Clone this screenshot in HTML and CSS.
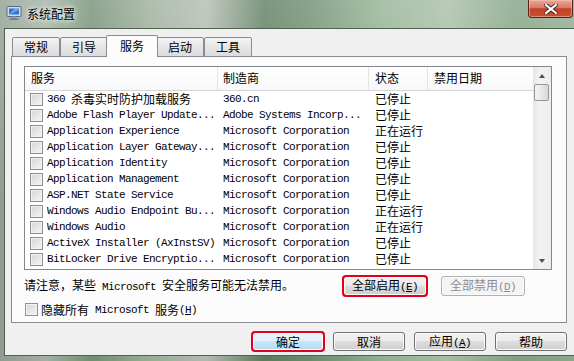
FILE: index.html
```html
<!DOCTYPE html>
<html lang="zh-CN">
<head>
    <meta charset="UTF-8">
    <title>系统配置</title>
    <link rel="stylesheet" href="styles.css">
</head>
<body>
    <div class="window">
        <div class="titlebar">
            <!-- icono de la ventana -->
            <svg class="app-icon" viewBox="0 0 16 16" width="16" height="16">
                <rect x="1" y="1.5" width="14" height="10" rx="1" fill="#d3dbe6" stroke="#5b6b80"/>
                <rect x="3" y="3.5" width="10" height="6" fill="#2f76d2"/>
                <path d="M3 9.5 L9 3.5 L13 3.5 L13 4.5 L4 9.5 Z" fill="#8fc0f2" opacity="0.7"/>
                <rect x="6" y="11.5" width="4" height="2" fill="#8a97a8"/>
                <rect x="3.5" y="13.5" width="9" height="1.5" fill="#6b7889"/>
            </svg>
            <span class="title">系统配置</span>
            <div class="close-btn">
                <svg viewBox="0 0 14 10" width="14" height="10">
                    <path d="M2 1 L12 9 M12 1 L2 9" stroke="#3b2620" stroke-width="4" stroke-linecap="square"/>
                    <path d="M2 1 L12 9 M12 1 L2 9" stroke="#ffffff" stroke-width="2.2" stroke-linecap="square"/>
                </svg>
            </div>
        </div>

        <div class="client">
            <div class="tabs">
                <div class="tab">常规</div>
                <div class="tab">引导</div>
                <div class="tab active">服务</div>
                <div class="tab">启动</div>
                <div class="tab">工具</div>
            </div>

            <div class="panel">
                <div class="listbox">
                    <div class="list-body">
                        <div class="row head">
                            <div class="hcell c1">服务</div>
                            <div class="hcell c2">制造商</div>
                            <div class="hcell c3">状态</div>
                            <div class="hcell c4">禁用日期</div>
                        </div>
                        <div class="row">
                            <div class="cell c1"><span class="cb"></span><span class="m">360 </span>杀毒实时防护加载服务</div>
                            <div class="cell c2 m">360.cn</div>
                            <div class="cell c3">已停止</div>
                            <div class="cell c4"></div>
                        </div>
                        <div class="row">
                            <div class="cell c1"><span class="cb"></span><span class="m">Adobe Flash Player Update...</span></div>
                            <div class="cell c2 m">Adobe Systems Incorp...</div>
                            <div class="cell c3">已停止</div>
                            <div class="cell c4"></div>
                        </div>
                        <div class="row">
                            <div class="cell c1"><span class="cb"></span><span class="m">Application Experience</span></div>
                            <div class="cell c2 m">Microsoft Corporation</div>
                            <div class="cell c3">正在运行</div>
                            <div class="cell c4"></div>
                        </div>
                        <div class="row">
                            <div class="cell c1"><span class="cb"></span><span class="m">Application Layer Gateway...</span></div>
                            <div class="cell c2 m">Microsoft Corporation</div>
                            <div class="cell c3">已停止</div>
                            <div class="cell c4"></div>
                        </div>
                        <div class="row">
                            <div class="cell c1"><span class="cb"></span><span class="m">Application Identity</span></div>
                            <div class="cell c2 m">Microsoft Corporation</div>
                            <div class="cell c3">已停止</div>
                            <div class="cell c4"></div>
                        </div>
                        <div class="row">
                            <div class="cell c1"><span class="cb"></span><span class="m">Application Management</span></div>
                            <div class="cell c2 m">Microsoft Corporation</div>
                            <div class="cell c3">已停止</div>
                            <div class="cell c4"></div>
                        </div>
                        <div class="row">
                            <div class="cell c1"><span class="cb"></span><span class="m">ASP.NET State Service</span></div>
                            <div class="cell c2 m">Microsoft Corporation</div>
                            <div class="cell c3">已停止</div>
                            <div class="cell c4"></div>
                        </div>
                        <div class="row">
                            <div class="cell c1"><span class="cb"></span><span class="m">Windows Audio Endpoint Bu...</span></div>
                            <div class="cell c2 m">Microsoft Corporation</div>
                            <div class="cell c3">正在运行</div>
                            <div class="cell c4"></div>
                        </div>
                        <div class="row">
                            <div class="cell c1"><span class="cb"></span><span class="m">Windows Audio</span></div>
                            <div class="cell c2 m">Microsoft Corporation</div>
                            <div class="cell c3">正在运行</div>
                            <div class="cell c4"></div>
                        </div>
                        <div class="row">
                            <div class="cell c1"><span class="cb"></span><span class="m">ActiveX Installer (AxInstSV)</span></div>
                            <div class="cell c2 m">Microsoft Corporation</div>
                            <div class="cell c3">已停止</div>
                            <div class="cell c4"></div>
                        </div>
                        <div class="row">
                            <div class="cell c1"><span class="cb"></span><span class="m">BitLocker Drive Encryptio...</span></div>
                            <div class="cell c2 m">Microsoft Corporation</div>
                            <div class="cell c3">已停止</div>
                            <div class="cell c4"></div>
                        </div>
                    </div>
                    <div class="scrollbar">
                        <div class="sb-arrow"><span class="tri up"></span></div>
                        <div class="sb-thumb"></div>
                        <div class="sb-track"></div>
                        <div class="sb-arrow"><span class="tri down"></span></div>
                    </div>
                </div>

                <div class="note-row">
                    <span class="note">请注意，某些<span class="m"> Microsoft </span>安全服务可能无法禁用。</span>
                    <button class="btn wide marked">全部启用<span class="m">(<u>E</u>)</span></button>
                    <button class="btn wide" disabled>全部禁用<span class="m">(<u>D</u>)</span></button>
                </div>

                <label class="hide-ms">
                    <span class="cb"></span>隐藏所有<span class="m"> Microsoft </span>服务<span class="m">(<u>H</u>)</span>
                </label>
            </div>

            <div class="actions">
                <button class="btn default marked">确定</button>
                <button class="btn">取消</button>
                <button class="btn">应用<span class="m">(<u>A</u>)</span></button>
                <button class="btn">帮助</button>
            </div>
        </div>
    </div>
</body>
</html>
```

FILE: styles.css
```css
body {
    margin: 0;
    overflow: hidden;
    font-family: "Noto Sans CJK SC", "DejaVu Sans", sans-serif;
    font-size: 12px;
    color: #000;
}

.window {
    width: 574px;
    height: 361px;
    display: flex;
    flex-direction: column;
    /* vidrio tipo Aero */
    background:
        linear-gradient(180deg, rgba(255, 255, 255, 0.22), rgba(255, 255, 255, 0) 60%),
        linear-gradient(90deg, #8e9c8e 0%, #a3b0a2 8%, #6f8e72 16%, #9aac98 26%, #b1bab0 36%, #5a7b5d 46%, #6a8c6c 54%, #8fb08f 66%, #a5bda3 78%, #7fa080 90%, #8aa88a 100%);
    box-sizing: border-box;
}

.titlebar {
    height: 28px;
    display: flex;
    align-items: center;
    padding-left: 6px;
    flex: none;
}

.app-icon {
    margin-top: -2px;
}

.title {
    margin-left: 5px;
    margin-top: -1px;
    font-size: 12px;
    text-shadow: 0 0 4px #fff, 0 0 6px rgba(255, 255, 255, 0.8);
}

.close-btn {
    margin-left: auto;
    margin-right: 1px;
    align-self: flex-start;
    width: 45px;
    height: 18px;
    box-sizing: border-box;
    border: 1px solid #5b2218;
    border-top: none;
    border-radius: 0 0 4px 4px;
    background: linear-gradient(180deg, #e9a898 0%, #d87a66 45%, #c3402a 52%, #c8502f 100%);
    box-shadow: inset 0 0 0 1px rgba(255, 200, 190, 0.5);
    display: flex;
    align-items: center;
    justify-content: center;
}

.client {
    flex: 1;
    margin: 0 0 5px 4px;
    border: 1px solid #50604f;
    border-right: none;
    background: #f0f0f0;
    padding: 6px 7px 0 6px;
    display: flex;
    flex-direction: column;
}

/* pestañas */
.tabs {
    display: flex;
    align-items: flex-end;
    height: 22px;
    margin-bottom: -1px;
    padding-left: 1px;
    position: relative;
    z-index: 1;
}

.tab {
    box-sizing: border-box;
    height: 20px;
    padding: 0 11px;
    border: 1px solid #898c95;
    border-radius: 2px 2px 0 0;
    background: linear-gradient(180deg, #f3f3f3, #e5e5e5 55%, #dcdcdc);
    line-height: 18px;
}

.tab.active {
    height: 22px;
    margin: 0 -2px;
    padding: 0 13px;
    border-bottom: none;
    background: #fcfcfc;
    position: relative;
    z-index: 2;
    line-height: 20px;
}

.panel {
    box-sizing: border-box;
    height: 267px;
    border: 1px solid #898c95;
    background: #fcfcfc;
    padding: 9px 14px 0 12px;
}

/* lista de servicios */
.listbox {
    box-sizing: border-box;
    height: 204px;
    border: 1px solid #828790;
    background: #fff;
    display: flex;
}

.list-body {
    flex: 1;
}

.row {
    display: grid;
    grid-template-columns: 193px 151px 59px 1fr;
    height: 16px;
    align-items: center;
    line-height: 16px;
    white-space: nowrap;
}

.row.head {
    height: 24px;
    box-sizing: border-box;
    border-bottom: 1px solid #d5d5d5;
    background: linear-gradient(180deg, #ffffff, #f7f8fa);
    align-items: stretch;
}

.hcell {
    display: flex;
    align-items: center;
    border-right: 1px solid #e3e4e6;
    padding-left: 6px;
    padding-bottom: 1px;
}

.hcell.c2 {
    padding-left: 5px;
}

.hcell.c4 {
    border-right: none;
}

.cell {
    overflow: hidden;
}

.cell.c1 {
    display: flex;
    align-items: center;
    padding-left: 5px;
}

.cell.c2 {
    padding-left: 5px;
}

.cell.c3 {
    padding-left: 6px;
}

.m {
    font-family: "Liberation Mono", monospace;
    font-size: 11px;
    letter-spacing: -0.6px;
    white-space: pre;
}

.cb {
    flex: none;
    display: inline-block;
    width: 13px;
    height: 13px;
    box-sizing: border-box;
    border: 1px solid #8f8f8f;
    background: linear-gradient(135deg, #d4d6da, #f4f4f4);
    box-shadow: inset 0 0 0 1px #f2f2f2;
    margin-right: 4px;
}

/* barra de desplazamiento */
.scrollbar {
    width: 17px;
    display: flex;
    flex-direction: column;
    background: linear-gradient(90deg, #e6e6e6, #f3f3f3 40%, #ededed);
    padding-right: 1px;
}

.sb-arrow {
    height: 17px;
    display: flex;
    align-items: center;
    justify-content: center;
}

.tri {
    width: 0;
    height: 0;
    border-left: 3.5px solid transparent;
    border-right: 3.5px solid transparent;
}

.tri.up {
    border-bottom: 4px solid #4d4d4d;
}

.tri.down {
    border-top: 4px solid #4d4d4d;
}

.sb-thumb {
    height: 17px;
    margin: 0 1px;
    box-sizing: border-box;
    border: 1px solid #979797;
    border-radius: 2px;
    background: linear-gradient(90deg, #f4f4f4, #e8e8e8 50%, #d6d6d6);
}

.sb-track {
    flex: 1;
}

/* botones */
.btn {
    font-family: "Noto Sans CJK SC", "DejaVu Sans", sans-serif;
    font-size: 12px;
    color: #000;
    box-sizing: border-box;
    width: 72px;
    height: 19px;
    padding: 0;
    border: 1px solid #707070;
    border-radius: 3px;
    background: linear-gradient(180deg, #f2f2f2 0%, #ebebeb 49%, #dddddd 50%, #cfcfcf 100%);
    box-shadow: inset 0 0 0 1px #fbfbfb;
    line-height: 16px;
}

.btn.default {
    border-color: #3c7fb1;
    background: linear-gradient(180deg, #ecf6fc 0%, #dff0fa 49%, #c8e6f8 50%, #b6dbf1 100%);
}

.btn.wide {
    width: 84px;
    height: 20px;
}

.btn:disabled {
    color: #8d8d8d;
    border-color: #adb2b5;
    background: #f4f4f4;
}

.btn.marked {
    outline: 2px solid #e3001b;
    outline-offset: -1px;
}

.note-row {
    display: flex;
    align-items: center;
    height: 21px;
    margin-top: 5px;
}

.note {
    flex: 0 0 319px;
    white-space: nowrap;
    margin-top: -2px;
}

.note-row .btn + .btn {
    margin-left: 14px;
}

.hide-ms {
    display: flex;
    align-items: center;
    height: 13px;
    margin-top: 7px;
    padding-left: 1px;
    white-space: nowrap;
}

.hide-ms .cb {
    margin-right: 3px;
}

.actions {
    display: flex;
    justify-content: flex-end;
    gap: 9px;
    margin-top: 9px;
}
```
